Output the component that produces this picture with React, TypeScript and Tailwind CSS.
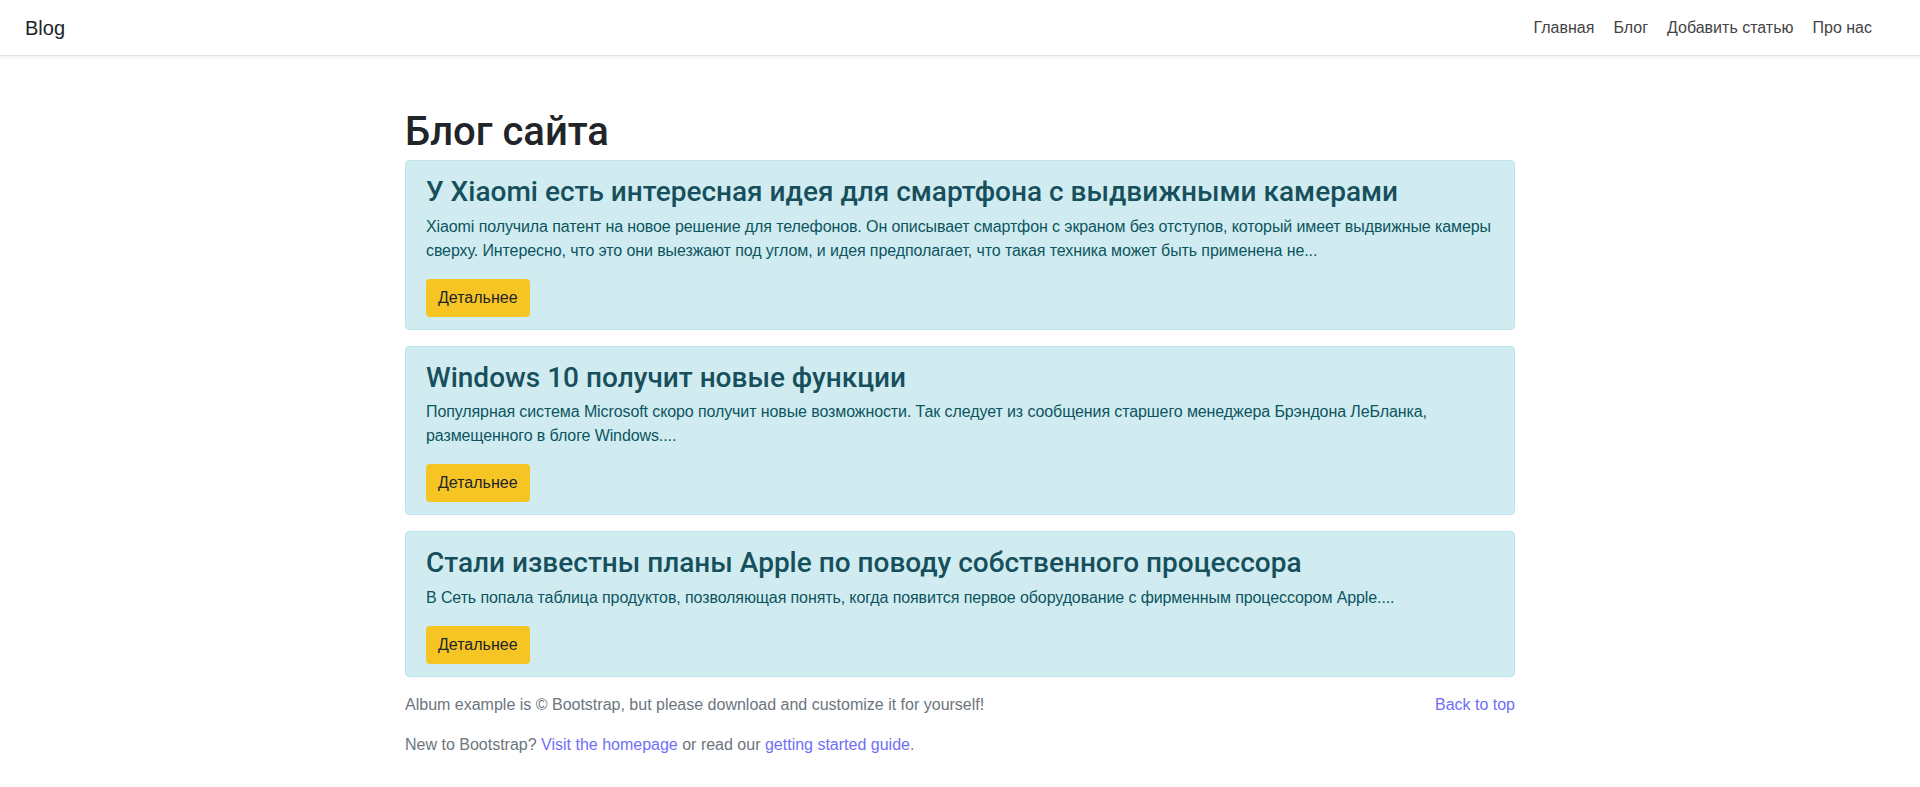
const posts = [
  {
    title: "У Xiaomi есть интересная идея для смартфона с выдвижными камерами",
    text: "Xiaomi получила патент на новое решение для телефонов. Он описывает смартфон с экраном без отступов, который имеет выдвижные камеры сверху. Интересно, что это они выезжают под углом, и идея предполагает, что такая техника может быть применена не...",
  },
  {
    title: "Windows 10 получит новые функции",
    text: "Популярная система Microsoft скоро получит новые возможности. Так следует из сообщения старшего менеджера Брэндона ЛеБланка, размещенного в блоге Windows....",
  },
  {
    title: "Стали известны планы Apple по поводу собственного процессора",
    text: "В Сеть попала таблица продуктов, позволяющая понять, когда появится первое оборудование с фирменным процессором Apple....",
  },
];

const body = { fontFamily: '"Liberation Sans", Arial, sans-serif' };
const head = { fontFamily: 'Roboto, "Liberation Sans", sans-serif' };

export default function App() {
  return (
    <div className="min-h-[787px] bg-white text-[16px] leading-[1.5] text-[#212529]" style={body}>
      <header className="flex h-[56px] items-center justify-between border-b border-[#e3e3e3] pl-[25px] pr-[48px] shadow-[0_2px_4px_rgba(0,0,0,0.06)]">
        <a className="text-[20px] leading-[30px] text-[#212529]">Blog</a>
        <nav className="flex items-center gap-[19px] text-[16px] text-[#444]">
          <a>Главная</a>
          <a>Блог</a>
          <a>Добавить статью</a>
          <a>Про нас</a>
        </nav>
      </header>

      <main className="mx-auto w-[1140px] px-[15px] pt-[48px]">
        <h1 className="mb-1 pt-1 text-[40px] font-medium leading-[48px] text-[#212529]" style={head}>
          Блог сайта
        </h1>

        {posts.map((p) => (
          <div
            key={p.title}
            className="mb-4 rounded-[4px] border border-[#bee5eb] bg-[#d1ecf1] px-5 py-3 text-[#0c5460]"
          >
            <h3 className="mb-[6px] pt-[2px] text-[28px] font-medium leading-[1.2] text-[#17505c]" style={head}>
              {p.title}
            </h3>
            <p className="mb-4 tracking-[-0.1px]">{p.text}</p>
            <button className="h-[38px] rounded-[4px] bg-[#f6c423] px-3 text-[16px] text-[#212529]">
              Детальнее
            </button>
          </div>
        ))}

        <footer className="text-[#6c757d]">
          <p className="float-right">
            <a className="text-[#6f6ff6]">Back to top</a>
          </p>
          <p className="mb-4">Album example is © Bootstrap, but please download and customize it for yourself!</p>
          <p>
            New to Bootstrap? <a className="text-[#6f6ff6]">Visit the homepage</a> or read our{" "}
            <a className="text-[#6f6ff6]">getting started guide</a>.
          </p>
        </footer>
      </main>
    </div>
  );
}
